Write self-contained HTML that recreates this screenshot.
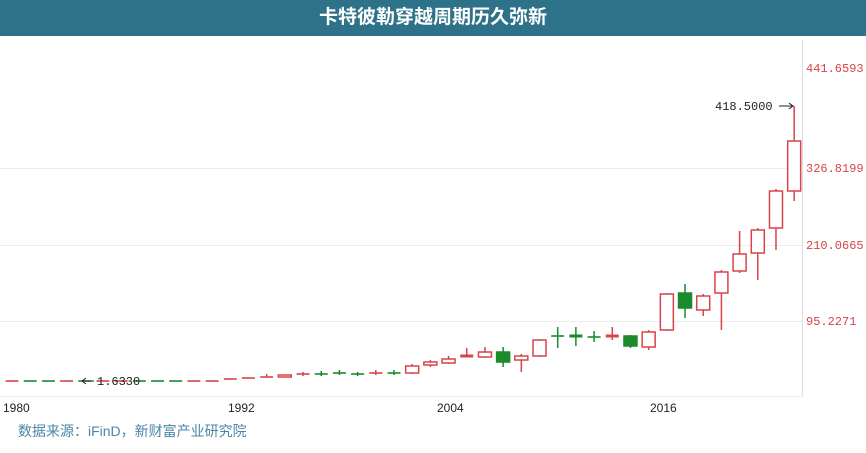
<!DOCTYPE html><html><head><meta charset="utf-8"><style>
body{margin:0;width:866px;height:453px;background:#fff;overflow:hidden;font-family:"Liberation Sans","Noto Sans CJK SC",sans-serif}
.t{position:absolute;left:0;top:0;width:866px;height:36px;background:#2d7289;color:#fff;font-weight:bold;font-size:19px;text-align:center;line-height:36px}
.src{position:absolute;left:18px;top:421px;font-size:14px;color:#4a86a8}
</style></head><body>
<div class="t">卡特彼勒穿越周期历久弥新</div>
<svg width="866" height="453" style="position:absolute;left:0;top:0" id="s">
<g stroke="#ececec"><line x1="0" y1="168.5" x2="802" y2="168.5"/><line x1="0" y1="245.5" x2="802" y2="245.5"/><line x1="0" y1="321.5" x2="802" y2="321.5"/><line x1="0" y1="396.5" x2="802" y2="396.5"/></g>
<line x1="802.5" y1="40" x2="802.5" y2="396" stroke="#ddd"/>
<g font-family="Liberation Mono,monospace" font-size="12" fill="#d9434a">
<text x="806" y="72">441.6593</text><text x="806" y="172">326.8199</text><text x="806" y="249">210.0665</text><text x="806" y="325">95.2271</text></g>
<g font-family="Liberation Sans,sans-serif" font-size="12" fill="#222">
<text x="3" y="412">1980</text><text x="228" y="412">1992</text><text x="437" y="412">2004</text><text x="650" y="412">2016</text></g>
<g id="c"></g>
<text x="715" y="110" font-family="Liberation Mono,monospace" font-size="12" fill="#222">418.5000</text>
<line x1="779" y1="106" x2="792" y2="106" stroke="#222"/><path d="M789 103L793 106L789 109" fill="none" stroke="#222"/>
<line x1="82" y1="381" x2="94" y2="381" stroke="#222"/><path d="M86 378L82 381L86 384" fill="none" stroke="#222"/>
<text x="97" y="385" font-family="Liberation Mono,monospace" font-size="12" fill="#222">1.6330</text>
</svg>
<div class="src">数据来源：iFinD，新财富产业研究院</div>
<script>
var R="#d9434a",G="#1a8a2a";
var d=[[381,381,0,0,R],[381,381,0,0,G],[381,381,0,0,G],[381,381,0,0,R],[381,381,0,0,G],[381,381,0,0,R],[381,381,0,0,R],[381,381,0,0,G],[381,381,0,0,G],[381,381,0,0,G],[381,381,0,0,R],[381,381,0,0,R],
[379,379,0,0,R],[378,378,0,0,R],[377,377,374,377,R],[375,377,0,0,R],[374,374,372,376,R],[374,374,371,376,G],[373,373,370,375,G],[374,374,372,376,G],[373,373,370,375,R],[373,373,370,375,G],
[366,373,364,374,R],[362,365,360,367,R],[359,363,356,364,R],[356,357,348,357,R],[352,357,347,358,R],[352,362,347,367,G],[356,360,354,372,R],[340,356,339,357,R],[336,336,327,348,G],[336,337,327,346,G],[337,337,331,342,G],[336,337,327,340,R],[336,346,335,348,G],[332,347,330,350,R],[294,330,293,331,R],[293,308,284,318,G],[296,310,294,316,R],[272,293,270,330,R],[254,271,231,273,R],[230,253,228,280,R],[191,228,189,250,R],[141,191,106,201,R]];
var s="";d.forEach(function(c,i){var x=12+i*18.19,w=13;
if(c[2])s+='<line x1="'+x+'" y1="'+c[2]+'" x2="'+x+'" y2="'+c[3]+'" stroke="'+c[4]+'" stroke-width="1.5"/>';
if(c[1]-c[0]<2)s+='<line x1="'+(x-w/2)+'" y1="'+c[0]+'" x2="'+(x+w/2)+'" y2="'+c[0]+'" stroke="'+c[4]+'" stroke-width="'+(c[1]>c[0]?3:1.6)+'"/>';
else s+='<rect x="'+(x-6.5)+'" y="'+c[0]+'" width="13" height="'+(c[1]-c[0])+'" fill="'+(c[4]==G?G:'#fff')+'" stroke="'+c[4]+'" stroke-width="1.5"/>';});
document.getElementById("c").innerHTML=s;
</script>
</body></html>
